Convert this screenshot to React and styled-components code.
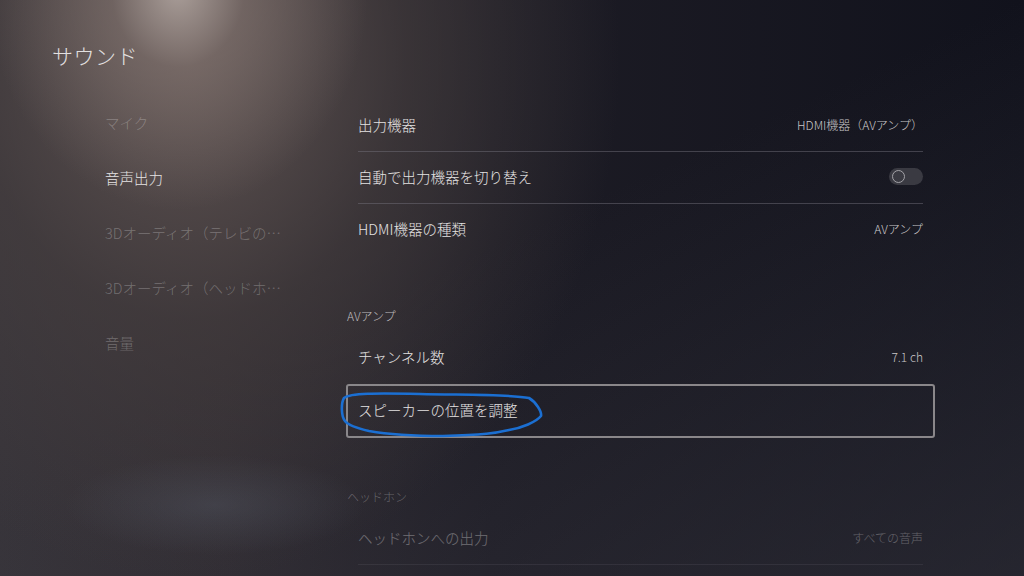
import React from "react";
import styled, { createGlobalStyle, css } from "styled-components";

const GlobalStyle = createGlobalStyle`
  html, body { margin: 0; padding: 0; background: #12121d; }
  body { font-family: "Noto Sans CJK JP", "Noto Sans", sans-serif; }
  * { box-sizing: border-box; }
`;

const Page = styled.div`
  width: 1024px;
  height: 576px;
  overflow: hidden;
  position: relative;
  padding-left: 52px;
  background:
    radial-gradient(ellipse 150px 50px at 215px 505px, rgba(88, 94, 108, 0.35), rgba(88, 94, 108, 0) 100%),
    radial-gradient(ellipse 190px 220px at 178px -10px, rgba(190, 178, 172, 0.8) 0%, rgba(140, 125, 120, 0.5) 35%, rgba(100, 88, 86, 0) 100%),
    radial-gradient(ellipse 430px 520px at 190px 60px, rgba(98, 86, 84, 0.95) 0%, rgba(72, 64, 64, 0.6) 50%, rgba(60, 56, 60, 0) 100%),
    linear-gradient(155deg, rgba(0, 0, 0, 0) 45%, rgba(58, 57, 66, 0.5) 100%),
    linear-gradient(90deg, #37343a 0%, #302c32 22%, #1d1c25 48%, #11121c 100%);
`;

const Title = styled.h1`
  margin: 0;
  padding-top: 40px;
  height: 70px;
  line-height: 30px;
  font-size: 21px;
  font-weight: 300;
  color: #e2e0e0;
  letter-spacing: 0.5px;
`;

const Body = styled.div`
  display: flex;
  padding-left: 53px;
`;

const Nav = styled.nav`
  width: 241px;
  padding-top: 25px;
  display: flex;
  flex-direction: column;
`;

const NavItem = styled.div`
  height: 55px;
  line-height: 55px;
  font-size: 14.5px;
  font-weight: 300;
  white-space: nowrap;
  color: ${(p) => (p.$active ? "#e6e4e4" : "rgba(255, 255, 255, 0.26)")};
`;

const Content = styled.section`
  width: 589px;
  padding-top: 30px;
  display: flex;
  flex-direction: column;
`;

const Row = styled.div`
  position: relative;
  height: 52px;
  padding: 0 12px 4px;
  display: flex;
  align-items: center;
  justify-content: space-between;
  opacity: ${(p) => (p.$dim ? 0.38 : 1)};
  &::after {
    content: "";
    position: absolute;
    left: 12px;
    right: 12px;
    bottom: 0;
    height: 1px;
    background: ${(p) => (p.$divider ? "rgba(120, 118, 128, 0.45)" : "transparent")};
  }
  ${(p) =>
    p.$focused &&
    css`
      height: 54px;
      border: 2px solid #8a878a;
      border-radius: 3px;
      padding: 0 10px 4px;
    `}
`;

const Label = styled.span`
  font-size: 14.5px;
  font-weight: 300;
  color: #e4e2e2;
`;

const Value = styled.span`
  font-size: 12px;
  font-weight: 300;
  color: #c8c6c8;
`;

const SectionHeader = styled.div`
  margin-top: ${(p) => p.$mt}px;
  height: 32px;
  line-height: 32px;
  padding-left: 1px;
  font-size: 12px;
  font-weight: 300;
  color: ${(p) => (p.$dim ? "rgba(255,255,255,0.28)" : "#bcbabd")};
`;

const Toggle = styled.div`
  width: 34px;
  height: 17px;
  border-radius: 9px;
  background: #3a3a42;
  display: flex;
  align-items: center;
  padding-left: 3px;
`;

const Knob = styled.div`
  width: 13px;
  height: 13px;
  border-radius: 50%;
  border: 1.5px solid #a4a3a8;
`;

const Scribble = styled.svg`
  position: absolute;
  left: -12px;
  top: 2px;
  width: 212px;
  height: 56px;
  overflow: visible;
  pointer-events: none;
`;

export default function App() {
  return (
    <>
      <GlobalStyle />
      <Page>
        <Title>サウンド</Title>
        <Body>
          <Nav>
            <NavItem>マイク</NavItem>
            <NavItem $active>音声出力</NavItem>
            <NavItem>3Dオーディオ（テレビの…</NavItem>
            <NavItem>3Dオーディオ（ヘッドホ…</NavItem>
            <NavItem>音量</NavItem>
          </Nav>
          <Content>
            <Row $divider>
              <Label>出力機器</Label>
              <Value>HDMI機器（AVアンプ）</Value>
            </Row>
            <Row $divider>
              <Label>自動で出力機器を切り替え</Label>
              <Toggle>
                <Knob />
              </Toggle>
            </Row>
            <Row>
              <Label>HDMI機器の種類</Label>
              <Value>AVアンプ</Value>
            </Row>

            <SectionHeader $mt={44}>AVアンプ</SectionHeader>
            <Row>
              <Label>チャンネル数</Label>
              <Value>7.1 ch</Value>
            </Row>
            <Row $focused>
              <Label>スピーカーの位置を調整</Label>
              <Scribble viewBox="0 0 212 56">
                <path
                  d="M 8 10 C 14 5, 40 5, 84 6 S 172 6, 193 10 C 200 14, 206 24, 205 28 C 200 34, 186 40, 173 42 C 160 45, 148 47, 107 48 C 80 48, 50 46, 33 43 C 20 40, 12 37, 9 33 C 5 28, 5 15, 8 10 Z"
                  fill="none"
                  stroke="#1b6fd2"
                  strokeWidth="2.6"
                  strokeLinejoin="round"
                  strokeLinecap="round"
                />
              </Scribble>
            </Row>

            <SectionHeader $mt={43} $dim>
              ヘッドホン
            </SectionHeader>
            <Row $divider $dim>
              <Label>ヘッドホンへの出力</Label>
              <Value>すべての音声</Value>
            </Row>
          </Content>
        </Body>
      </Page>
    </>
  );
}
